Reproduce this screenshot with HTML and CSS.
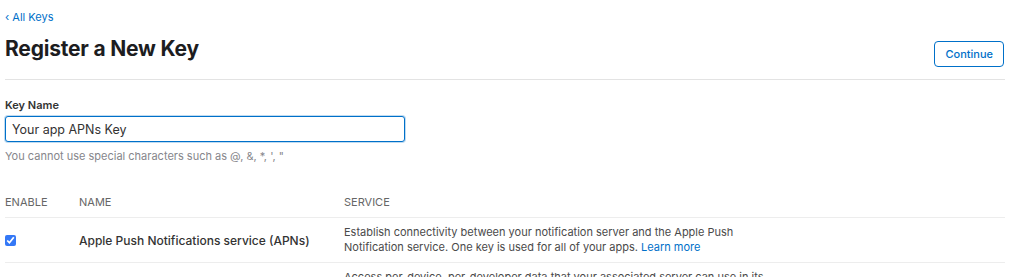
FILE: index.html
```html
<!DOCTYPE html>
<html lang="en">
<head>
  <meta charset="UTF-8">
  <title>Register a New Key</title>
  <link rel="stylesheet" href="styles.css">
</head>
<body>
<div class="page">
  <a class="back" href="#">&lsaquo; All Keys</a>
  <div class="page-head">
    <h1>Register a New Key</h1>
    <button class="btn">Continue</button>
  </div>

  <div class="field">
    <label for="keyName">Key Name</label>
    <input id="keyName" type="text" value="Your app APNs Key">
    <p class="hint">You cannot use special characters such as @, &amp;, *, ', "</p>
  </div>

  <div class="services">
    <div class="row head">
      <div>Enable</div>
      <div>Name</div>
      <div>Service</div>
    </div>
    <div class="row">
      <div><input type="checkbox" checked></div>
      <div class="name">Apple Push Notifications service (APNs)</div>
      <div class="desc">Establish connectivity between your notification server and the Apple Push Notification service. One key is used for all of your apps. <a href="#">Learn more</a></div>
    </div>
    <div class="row">
      <div><input type="checkbox"></div>
      <div class="name">DeviceCheck</div>
      <div class="desc">Access per-device, per-developer data that your associated server can use in its business logic.</div>
    </div>
  </div>
</div>
</body>
</html>
```

FILE: styles.css
```css
body {
  margin: 0;
  font-family: "Inter", "Liberation Sans", sans-serif;
  color: #333;
  background: #fff;
}

.page {
  width: 1000px;
  padding: 10px 0 0 5px;
}

a {
  color: #0070c9;
  text-decoration: none;
}

.back {
  display: block;
  font-size: 11px;
  line-height: 14px;
}

.page-head {
  display: flex;
  justify-content: space-between;
  align-items: flex-start;
  padding: 13px 0 12px;
  border-bottom: 1px solid #e3e3e3;
}

h1 {
  margin: 0;
  font-size: 21px;
  line-height: 24px;
  font-weight: 700;
  color: #1d1d1f;
  letter-spacing: -0.2px;
}

.btn {
  height: 26px;
  padding: 0 10px;
  margin: 4px 1px 0 0;
  background: #fff;
  color: #0070c9;
  border: 1px solid #0070c9;
  border-radius: 4px;
  font-family: inherit;
  font-size: 11px;
  font-weight: 500;
}

.field {
  padding-top: 18px;
}

.field label {
  display: block;
  font-size: 11px;
  font-weight: 600;
  line-height: 14px;
  margin-bottom: 4px;
}

.field input {
  box-sizing: border-box;
  width: 400px;
  height: 26px;
  padding: 0 6px;
  border: 1px solid #0070c9;
  border-radius: 3px;
  box-shadow: 0 0 0 1px rgba(0, 112, 201, 0.25);
  font-family: inherit;
  font-size: 12.5px;
  color: #333;
  outline: none;
}

.hint {
  margin: 7px 0 0;
  font-size: 11px;
  line-height: 14px;
  color: #86868b;
}

.services {
  margin-top: 32px;
}

.row {
  display: grid;
  grid-template-columns: 74px 265px 440px;
  align-items: center;
  border-bottom: 1px solid #ededed;
}

.row > div {
  padding: 7px 0;
}

.row.head {
  font-size: 11px;
  text-transform: uppercase;
  color: #666;
  line-height: 14px;
}

.row.head > div {
  padding: 0 0 8px;
}

.row input {
  margin: 0;
  width: 11px;
  height: 11px;
  accent-color: #3478f6;
  display: block;
}

.name {
  font-size: 12px;
  font-weight: 500;
  color: #333;
}

.desc {
  font-size: 11px;
  line-height: 15px;
  color: #4a4a4a;
}
```
